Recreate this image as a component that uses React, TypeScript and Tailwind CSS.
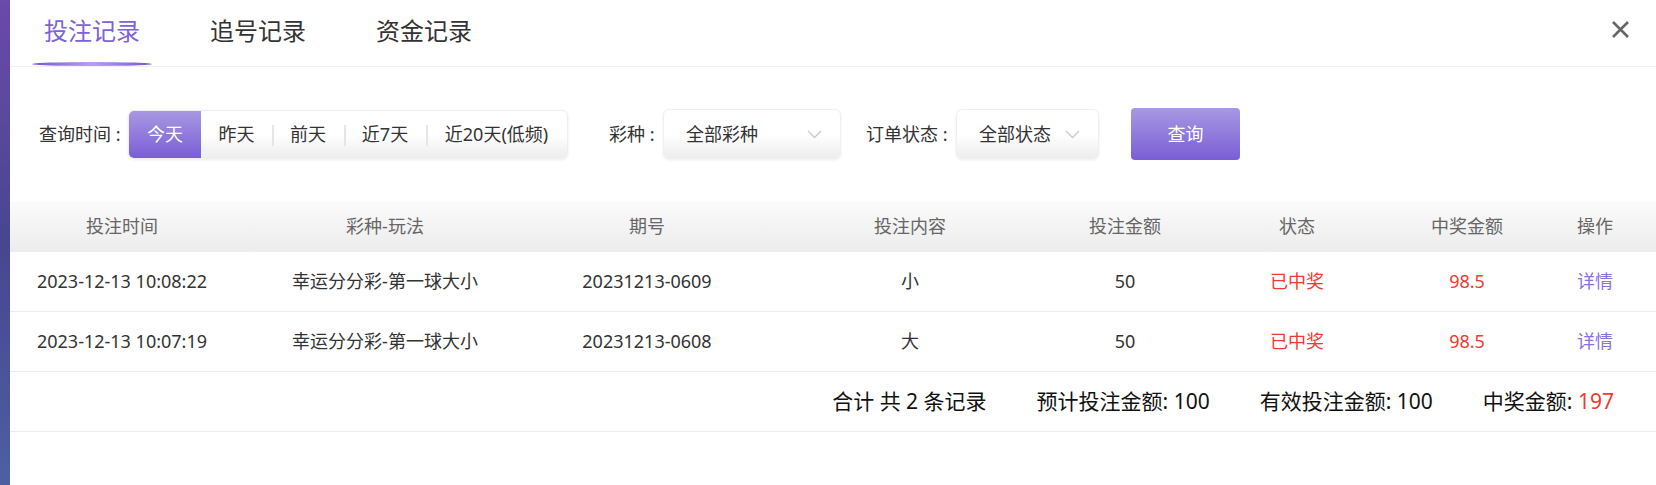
import React from "react";

const FONT = { fontFamily: '"Noto Sans", "Noto Sans CJK SC", sans-serif' };

const tabs = ["投注记录", "追号记录", "资金记录"];

const ranges = [
  { label: "今天", w: "w-[72px]" },
  { label: "昨天", w: "w-[71px]" },
  { label: "前天", w: "w-[72px]" },
  { label: "近7天", w: "w-[82px]" },
  { label: "近20天(低频)", w: "w-[141px]" },
];

const columns = ["投注时间", "彩种-玩法", "期号", "投注内容", "投注金额", "状态", "中奖金额", "操作"];

const rows = [
  { time: "2023-12-13 10:08:22", game: "幸运分分彩-第一球大小", issue: "20231213-0609", content: "小", amount: "50", status: "已中奖", win: "98.5" },
  { time: "2023-12-13 10:07:19", game: "幸运分分彩-第一球大小", issue: "20231213-0608", content: "大", amount: "50", status: "已中奖", win: "98.5" },
];

const grid =
  "grid grid-cols-[224px_302px_222px_304px_126px_218px_122px_134px] items-center text-center";

function Chevron() {
  return (
    <svg width="15" height="9" viewBox="0 0 15 9" fill="none">
      <path d="M1 1l6.5 6.5L14 1" stroke="#c6c9d1" strokeWidth="1.3" />
    </svg>
  );
}

function Select({ text, width }: { text: string; width: string }) {
  return (
    <div
      className={`${width} flex h-[50px] items-center justify-between rounded-[6px] border border-[#efefef] bg-gradient-to-b from-white via-white to-[#ededed] pl-[22px] pr-[18px] shadow-[0_1px_3px_rgba(0,0,0,0.08)]`}
    >
      <span className="text-[18px] text-[#333]">{text}</span>
      <Chevron />
    </div>
  );
}

export default function App() {
  return (
    <div className="flex h-[485px] w-[1656px] overflow-hidden" style={FONT}>
      <div className="w-[10px] shrink-0 bg-gradient-to-b from-[#6b4aa8] via-[#474690] to-[#4d5fa2]" />
      <div className="flex-1 overflow-hidden rounded-tl-[12px] bg-white">
        {/* tabs */}
        <div className="flex h-[67px] items-stretch justify-between border-b border-[#f0f0f0] pl-[22px] pr-[26px]">
          <div className="flex gap-[46px]">
            {tabs.map((t, i) => (
              <div key={t} className="relative flex items-center px-3 pb-[4px]">
                <span className={`text-[24px] leading-none ${i === 0 ? "text-[#7d62d8]" : "text-[#333]"}`}>{t}</span>
                {i === 0 && (
                  <div className="absolute bottom-[0px] left-0 right-0 h-[4px] rounded-[50%] bg-gradient-to-r from-[#7455d3] via-[#b99cf6] to-[#7455d3]" />
                )}
              </div>
            ))}
          </div>
          <button className="flex items-center pb-[8px]">
            <svg width="19" height="19" viewBox="0 0 19 19">
              <path d="M2 2l15 15M17 2L2 17" stroke="#666" strokeWidth="2.6" />
            </svg>
          </button>
        </div>

        {/* filters */}
        <div className="mt-[41px] flex items-center pl-[29px] text-[18px] text-[#333]">
          <span className="w-[89px] whitespace-nowrap">查询时间 :</span>
          <div className="flex h-[49px] overflow-hidden rounded-[6px] border border-[#efefef] bg-gradient-to-b from-white via-white to-[#ededed] shadow-[0_1px_3px_rgba(0,0,0,0.08)]">
            {ranges.map((r, i) => (
              <div
                key={r.label}
                className={`relative flex ${r.w} items-center justify-center ${
                  i === 0 ? "bg-gradient-to-b from-[#a898e2] to-[#7a5dd5] text-white" : "text-[#333]"
                }`}
              >
                {i > 1 && <div className="absolute left-0 top-[14px] h-[21px] w-[2px] bg-[#e6e6e6]" />}
                {r.label}
              </div>
            ))}
          </div>
          <span className="ml-[41px] w-[54px] whitespace-nowrap">彩种 :</span>
          <Select text="全部彩种" width="w-[178px]" />
          <span className="ml-[25px] w-[90px] whitespace-nowrap">订单状态 :</span>
          <Select text="全部状态" width="w-[143px]" />
          <button className="ml-[32px] h-[52px] w-[109px] rounded-[4px] bg-gradient-to-b from-[#a898e2] to-[#7a5dd5] text-[18px] text-white">
            查询
          </button>
        </div>

        {/* table */}
        <div className="mt-[41px] text-[18px]">
          <div className={`${grid} h-[51px] bg-gradient-to-b from-[#fbfbfb] to-[#ececec] text-[#666]`}>
            {columns.map((c) => (
              <div key={c}>{c}</div>
            ))}
          </div>
          {rows.map((r) => (
            <div key={r.issue} className={`${grid} h-[60px] border-b border-[#ececec] text-[#333]`}>
              <div>{r.time}</div>
              <div>{r.game}</div>
              <div>{r.issue}</div>
              <div>{r.content}</div>
              <div>{r.amount}</div>
              <div className="text-[#ee3b2e]">{r.status}</div>
              <div className="text-[#ee3b2e]">{r.win}</div>
              <div className="text-[#8a6fe0]">详情</div>
            </div>
          ))}
          <div className="flex h-[60px] items-center justify-end gap-[50px] border-b border-[#ebebf2] pr-[42px] text-[21px] text-[#111]">
            <span>合计 共 2 条记录</span>
            <span>预计投注金额: 100</span>
            <span>有效投注金额: 100</span>
            <span>
              中奖金额: <span className="text-[#ee3b2e]">197</span>
            </span>
          </div>
        </div>
      </div>
    </div>
  );
}
